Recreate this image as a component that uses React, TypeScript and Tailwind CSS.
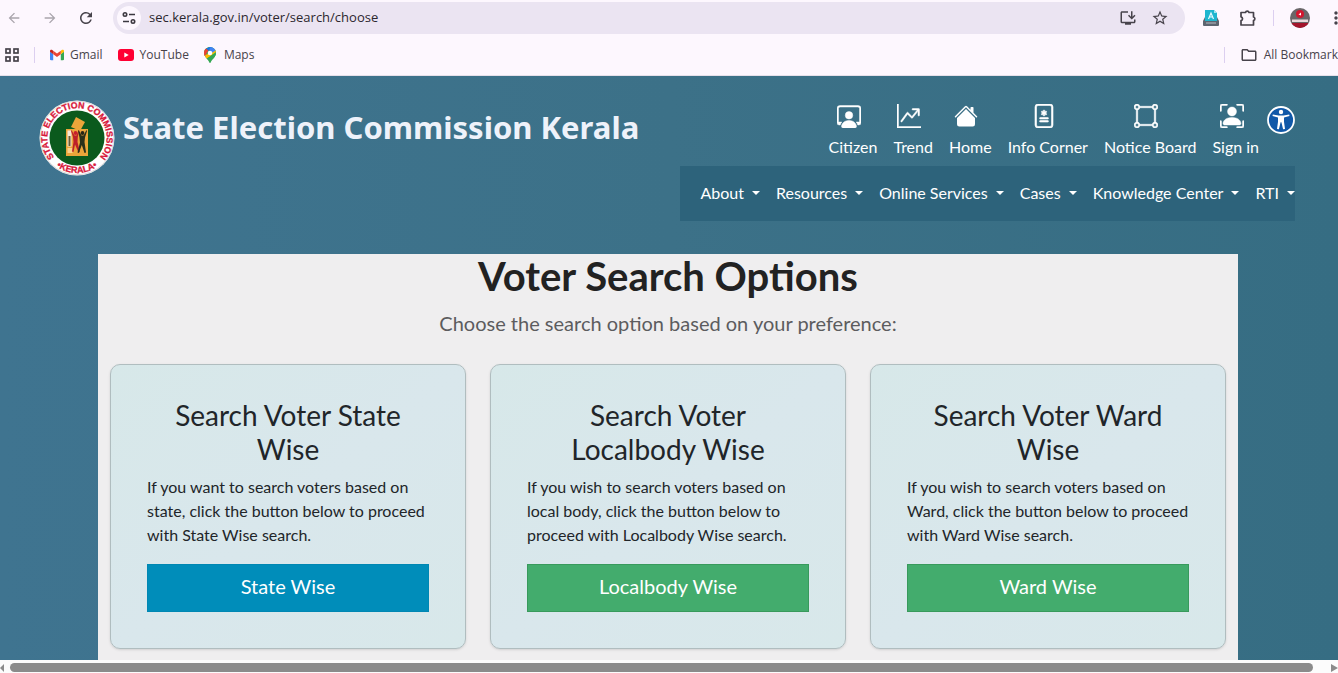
import {
  BsBoundingBoxCircles,
  BsFileMedical,
  BsGraphUpArrow,
  BsHouseFill,
  BsPersonBoundingBox,
  BsPersonWorkspace,
} from 'react-icons/bs'
import {
  MdArrowBack,
  MdArrowForward,
  MdMoreVert,
  MdOutlineFolder,
  MdOutlineInstallDesktop,
  MdRefresh,
  MdStarBorder,
} from 'react-icons/md'

const quickLinks = [
  { label: 'Citizen', icon: BsPersonWorkspace, stroke: 0.3 },
  { label: 'Trend', icon: BsGraphUpArrow, stroke: 0.3 },
  { label: 'Home', icon: BsHouseFill, stroke: 0 },
  { label: 'Info Corner', icon: BsFileMedical, stroke: 0.4 },
  { label: 'Notice Board', icon: BsBoundingBoxCircles, stroke: 0.3 },
  { label: 'Sign in', icon: BsPersonBoundingBox, stroke: 0.3 },
]

const menus = ['About', 'Resources', 'Online Services', 'Cases', 'Knowledge Center', 'RTI']

const options = [
  {
    title: 'Search Voter State Wise',
    text: 'If you want to search voters based on state, click the button below to proceed with State Wise search.',
    button: 'State Wise',
    color: 'bg-[#008dba] border-[#0087b3]',
  },
  {
    title: 'Search Voter Localbody Wise',
    text: 'If you wish to search voters based on local body, click the button below to proceed with Localbody Wise search.',
    button: 'Localbody Wise',
    color: 'bg-[#43ac6d] border-[#389a5c]',
  },
  {
    title: 'Search Voter Ward Wise',
    text: 'If you wish to search voters based on Ward, click the button below to proceed with Ward Wise search.',
    button: 'Ward Wise',
    color: 'bg-[#43ac6d] border-[#389a5c]',
  },
]

function GmailIcon() {
  return (
    <svg viewBox="0 0 24 18" className="w-[14px] h-3">
      <path d="M0 3v13.4C0 17.300.7 18 1.600 18H5.500V7.500L0 3z" fill="#4285f4" />
      <path d="M18.500 18h3.900c.9 0 1.600-.7 1.600-1.600V3l-5.500 4.500V18z" fill="#34a853" />
      <path d="M18.500 1.500v6L24 3.400V2.200C24 .2 21.700-.8 20.100.3l-1.600 1.200z" fill="#fbbc04" />
      <path d="M5.500 7.500v-6L12 6.400l6.500-4.900v6L12 12.400 5.500 7.500z" fill="#ea4335" />
      <path d="M0 2.200v1.200l5.500 4.100v-6L3.900.3C2.300-.8 0 .2 0 2.200z" fill="#c5221f" />
    </svg>
  )
}

function YouTubeIcon() {
  return (
    <svg viewBox="0 0 16 12" className="w-4 h-3">
      <rect width="16" height="12" rx="3" fill="#ff0033" />
      <path d="M6.300 3.500v5L10.700 6z" fill="#fff" />
    </svg>
  )
}

function MapsIcon() {
  return (
    <svg viewBox="0 0 24 32" className="w-3 h-4">
      <defs>
        <clipPath id="pin">
          <path d="M12 0C5.400 0 0 5.300 0 11.800c0 3.300 1.400 5.900 3.300 8.500 3.200 4.100 6 6.500 7.100 10.300.3 1 .7 1.400 1.600 1.400s1.300-.4 1.600-1.400c1.100-3.800 3.900-6.200 7.100-10.300 1.900-2.600 3.300-5.200 3.300-8.500C24 5.300 18.600 0 12 0z" />
        </clipPath>
      </defs>
      <g clipPath="url(#pin)">
        <path d="M0 0h24v32H0z" fill="#34a853" />
        <path d="M12 12 24 2v8L4 24-2 18z" fill="#fbbc04" />
        <path d="M24 2v10L12 24l14-2V2z" fill="#34a853" />
        <path d="M10 0h16v5L12 14z" fill="#4285f4" />
        <path d="M14-1 2.500 4l6 5z" fill="#1a73e8" />
        <path d="M-2 2h4.800l6 5L2 18h-4z" fill="#ea4335" />
      </g>
      <circle cx="12" cy="12" r="4.600" fill="#fff" />
    </svg>
  )
}

function AppsIcon() {
  return (
    <svg viewBox="0 0 14 14" className="w-[14px] h-[14px]" fill="none" stroke="#47434b" strokeWidth="1.700">
      <rect x="1" y="1" width="4" height="4" />
      <rect x="9" y="1" width="4" height="4" />
      <rect x="1" y="9" width="4" height="4" />
      <rect x="9" y="9" width="4" height="4" />
    </svg>
  )
}

function SiteSettingsIcon() {
  return (
    <svg viewBox="0 0 14 14" className="w-[14px] h-[14px]" fill="none" stroke="#3c3840" strokeWidth="1.600">
      <circle cx="3" cy="3.500" r="1.700" />
      <path d="M7 3.500h6M1 10.500h6" />
      <circle cx="11" cy="10.500" r="1.700" />
    </svg>
  )
}

// classic puzzle piece: knobs on the top and right, notch on the left
function ExtensionIcon() {
  return (
    <svg viewBox="0 0 18 18" className="w-[18px] h-[18px]" fill="none" stroke="currentColor" strokeWidth="1.700" strokeLinejoin="round">
      <path d="M2 3.500h4.500a1.800 1.800 0 0 1 3.500 0h4.500V8a1.800 1.800 0 0 1 0 3.500V16H2v-4.300a2 2 0 0 0 0-3.900z" />
    </svg>
  )
}

function PrinterIcon() {
  return (
    <svg viewBox="0 0 16 16" className="w-4 h-4">
      <path d="M2 7h12l2 4v4a1 1 0 0 1-1 1H1a1 1 0 0 1-1-1v-4z" fill="#5d6570" />
      <path d="M2 0h9l3 3v8H2z" fill="#1fb6cf" />
      <path d="M11 0v3h3z" fill="#a4e6ef" />
      <path d="M5.500 9 8 3l2.500 6M6.500 7h3" stroke="#e8fbff" strokeWidth="1.200" fill="none" />
      <path d="M3 13h10" stroke="#a7adb5" strokeWidth="1.200" />
    </svg>
  )
}

function Avatar() {
  return (
    <svg viewBox="0 0 20 20" className="w-5 h-5">
      <defs>
        <clipPath id="avatar">
          <circle cx="10" cy="10" r="10" />
        </clipPath>
      </defs>
      <g clipPath="url(#avatar)">
        <path d="M0 0h20v20H0z" fill="#6a6668" />
        <circle cx="10" cy="6" r="4" fill="#d3172f" />
        <path d="M8.500 6.500 11 4.500v3z" fill="#fff" />
        <path d="M2 11.500h16v2.500H2z" fill="#e9d9db" />
        <path d="M0 15h20v5H0z" fill="#a3142b" />
      </g>
    </svg>
  )
}

function CommissionLogo() {
  return (
    <svg viewBox="0 0 76 76" className="w-[76px] h-[76px] shrink-0" role="img" aria-label="State Election Commission Kerala">
      <defs>
        <path id="ring-top" d="M20.400 61.900A29.700 29.700 0 1 1 55.600 61.900" />
        <path id="ring-bottom" d="M10 59A35 35 0 0 0 66 59" />
      </defs>
      <circle cx="38" cy="38" r="37.500" fill="#fff" />
      <circle cx="38" cy="38" r="36.800" fill="none" stroke="#b9b3b3" strokeWidth=".5" />
      <circle cx="38" cy="38" r="27.500" fill="#0b5a1d" />
      <g fill="#d8173a" stroke="#d8173a" strokeWidth=".3" fontFamily="Liberation Sans, sans-serif" fontWeight="700">
        <text textAnchor="middle" fontSize="8.800">
          <textPath href="#ring-top" startOffset="50%">STATE ELECTION COMMISSION</textPath>
        </text>
        <text textAnchor="middle" fontSize="9">
          <textPath href="#ring-bottom" startOffset="50%">•KERALA•</textPath>
        </text>
      </g>
      <path d="M37 17l9 5-5 9-9-4z" fill="#eba53a" />
      <path d="M27 29h22v27H27z" fill="#eba53a" />
      <path d="M28.500 30.500h4v16h-4z" fill="#f3e9d8" />
      <path d="M29.500 36h2v10h-2z" fill="#6b5b32" />
      <path d="M28.500 48h5v5h-5z" fill="#fbd28a" />
      <circle cx="36.500" cy="33" r="1.900" fill="#c81e2d" />
      <path d="M32.500 30l3 5.500h2l2-5.500.6 1-1.300 6-.3 5 2.500 10-1.500.5-3.500-8-1.500 7.500-1.500-.5 1.500-9.500-.5-5-2-6z" fill="#bd2029" />
      <circle cx="43.500" cy="33" r="1.900" fill="#262616" />
      <path d="M39.800 30l2.700 5.500h2l3-5.500.5 1-2 6.500-.5 4.500 1.500 10.500-1.500.5-2.700-8-3 8-1.300-.5 2.500-10-.5-5-1.300-6z" fill="#29301a" />
    </svg>
  )
}

function AccessibilityIcon() {
  return (
    <svg viewBox="0 0 28 28" className="w-7 h-7">
      <circle cx="14" cy="14" r="13" fill="#1058a8" stroke="#fff" strokeWidth="1.800" />
      <circle cx="14" cy="6" r="2.200" fill="#fff" />
      <path
        d="M5.800 8.600l5.700 1h5l5.700-1 .3 1.300-5.500 1.700v4.200l1 7.200-1.900.3-1.700-7h-.8l-1.700 7-1.900-.3 1-7.200v-4.200L5.500 9.900z"
        fill="#fff"
      />
    </svg>
  )
}

function BrowserBar() {
  return (
    <div className="bg-[#fdf7fe] text-[#47434b] font-['Open_Sans','Noto_Sans',sans-serif] border-b border-[#e6e0ea] overflow-hidden shrink-0">
      <div className="flex items-center h-9 pl-[6px]">
        <button aria-label="Back" className="text-[#a9a5ac] mr-5"><MdArrowBack size={16} /></button>
        <button aria-label="Forward" className="text-[#a9a5ac] mr-[19px]"><MdArrowForward size={16} /></button>
        <button aria-label="Reload" className="mr-[18px]"><MdRefresh size={18} /></button>
        <div className="flex flex-1 items-center h-8 bg-[#ebe4f2] rounded-full pl-1 pr-4">
          <button aria-label="Site information" className="flex items-center justify-center w-6 h-6 bg-[#fdf7fe] rounded-full">
            <SiteSettingsIcon />
          </button>
          <input
            aria-label="Address"
            defaultValue="sec.kerala.gov.in/voter/search/choose"
            className="flex-1 min-w-0 ml-2 bg-transparent text-[13px] text-[#2b272e] outline-none"
          />
          <button aria-label="Install" className="mr-[14px]"><MdOutlineInstallDesktop size={18} /></button>
          <button aria-label="Bookmark this page"><MdStarBorder size={18} /></button>
        </div>
        <button aria-label="Print extension" className="ml-[18px]"><PrinterIcon /></button>
        <button aria-label="Extensions" className="ml-5"><ExtensionIcon /></button>
        <span className="w-px h-4 ml-4 mr-4 bg-[#dccff0]" />
        <button aria-label="Profile"><Avatar /></button>
        <button aria-label="Menu" className="ml-4 -mr-2"><MdMoreVert size={20} /></button>
      </div>
      <div className="flex items-center h-[39px] pb-px pl-[5px] text-xs">
        <button aria-label="Apps"><AppsIcon /></button>
        <span className="w-px h-4 mx-[15px] bg-[#dccff0]" />
        <a href="#" className="flex items-center gap-[6px] mr-[15px]"><GmailIcon />Gmail</a>
        <a href="#" className="flex items-center gap-[6px] mr-[15px]"><YouTubeIcon />YouTube</a>
        <a href="#" className="flex items-center gap-2"><MapsIcon />Maps</a>
        <span className="w-px h-4 ml-auto mr-[15px] bg-[#dccff0]" />
        <button className="flex items-center gap-[6px] whitespace-nowrap"><MdOutlineFolder size={18} />All Bookmark</button>
      </div>
    </div>
  )
}

function Header() {
  return (
    <header className="flex justify-between pl-[39px] pr-[43px] pt-6 text-white">
      <div className="flex items-start gap-2">
        <CommissionLogo />
        <h1 className="font-['Noto_Sans',sans-serif] font-bold text-[31px] leading-[54px] text-[#eef2fa] whitespace-nowrap">
          State Election Commission Kerala
        </h1>
      </div>
      <div className="flex flex-col items-end">
        <div className="flex items-start gap-2 pt-1">
          <div className="flex gap-4">
            {quickLinks.map(({ label, icon: Icon, stroke }) => (
              <a key={label} href="#" className="flex flex-col items-center gap-[7px] whitespace-nowrap">
                <Icon size={24} strokeWidth={stroke} className="mr-2" />
                {label}
              </a>
            ))}
          </div>
          <button aria-label="Accessibility options" className="mt-[2px]"><AccessibilityIcon /></button>
        </div>
        <nav className="flex items-center gap-4 h-[55px] mt-[7px] pb-[2px] pl-5 bg-[#2d637b] whitespace-nowrap">
          {menus.map((menu) => (
            <button key={menu} className="flex items-center gap-2">
              {menu}
              <span className="border-x-4 border-t-4 border-x-transparent border-t-white" />
            </button>
          ))}
        </nav>
      </div>
    </header>
  )
}

export default function App() {
  return (
    <div className="flex flex-col h-screen overflow-hidden font-['Lato',sans-serif] text-base">
      <BrowserBar />
      <div className="flex-1 min-h-0 overflow-hidden bg-linear-to-r from-[#3f7490] via-[#3c7188] to-[#366d83]">
        <Header />
        <div className="pr-[2px]">
          <main className="max-w-[1140px] mx-auto mt-[33px] px-3 pb-12 bg-[#efeeef] text-[#212529]">
            <h2 className="text-[40px] leading-[44px] font-bold text-center text-[#222]">Voter Search Options</h2>
            <p className="mt-[10px] mb-[26px] text-xl leading-[30px] text-center text-[#5c5c5e]">
              Choose the search option based on your preference:
            </p>
            <div className="grid grid-cols-3 gap-6">
              {options.map((option) => (
                <section
                  key={option.title}
                  className="px-9 pt-[33px] pb-9 bg-linear-to-br from-[#d7e8e9] via-[#d9e7ec] to-[#d8e8ea] border border-[#b0bdbf] rounded-[10px] shadow-sm"
                >
                  <h3 className="mb-[9px] text-[28px] leading-[34px] text-center">{option.title}</h3>
                  <p className="mb-[17px] leading-6">{option.text}</p>
                  <button className={`w-full h-12 pb-1 border text-xl text-white ${option.color}`}>{option.button}</button>
                </section>
              ))}
            </div>
          </main>
        </div>
      </div>
      <div className="flex items-center h-[13px] pt-[2px] shrink-0 bg-[#fcfcfc]">
        <span className="border-y-4 border-r-4 border-y-transparent border-r-[#8b8b8b]" />
        <span className="flex-1 h-[9px] ml-[6px] mr-[18px] bg-[#8b8b8b] rounded-full" />
        <span className="border-y-4 border-l-[7px] border-y-transparent border-l-[#8b8b8b]" />
      </div>
    </div>
  )
}
